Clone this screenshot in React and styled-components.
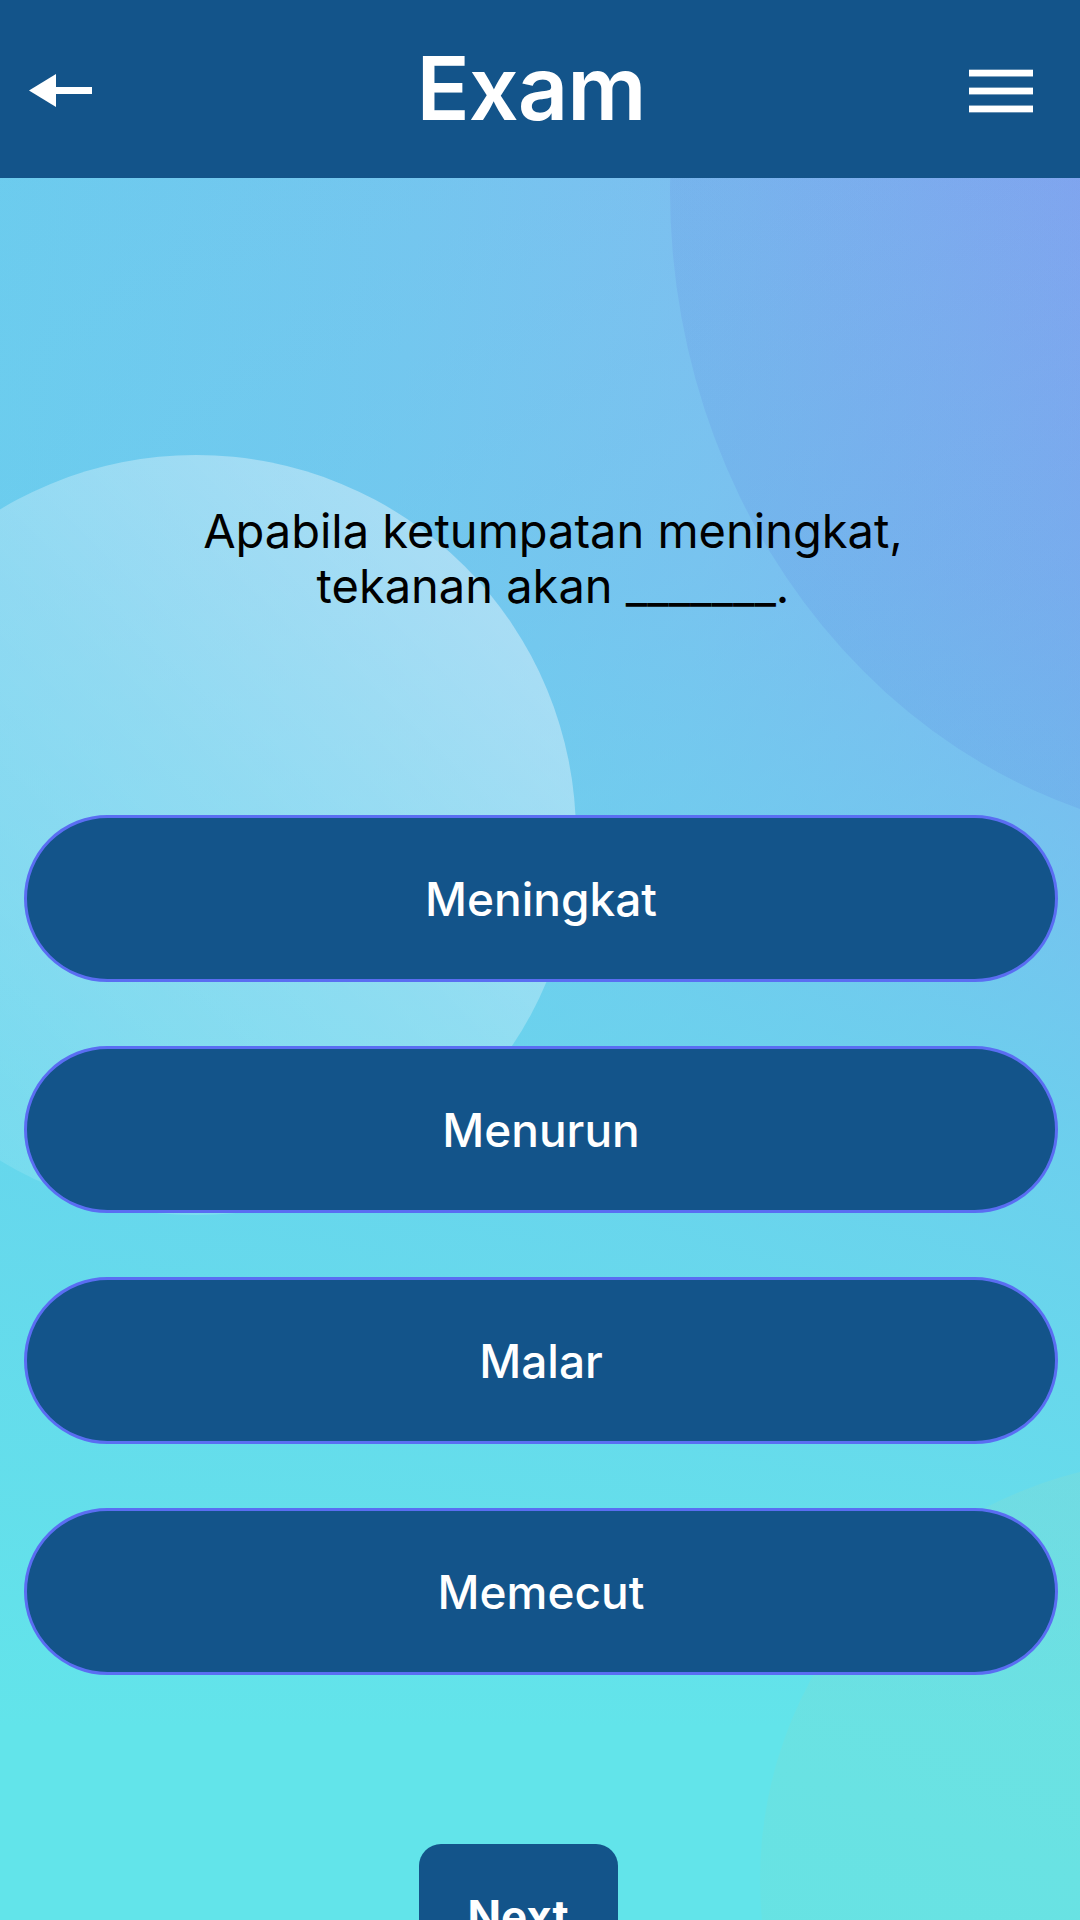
import React from 'react';
import styled, { createGlobalStyle } from 'styled-components';

const GlobalStyle = createGlobalStyle`
  html, body {
    margin: 0;
    padding: 0;
    overflow: hidden;
  }
  body {
    font-family: Inter, "Noto Sans", "Liberation Sans", sans-serif;
  }
  * {
    box-sizing: border-box;
  }
`;

const Page = styled.div`
  position: relative;
  width: 1080px;
  height: 1920px;
  overflow: hidden;
  display: flex;
  flex-direction: column;
  background:
    linear-gradient(180deg, rgba(104, 208, 237, 0) 0%, rgba(104, 210, 237, 0.35) 30%, rgba(100, 218, 236, 0.8) 60%, rgba(98, 228, 234, 1) 90%),
    linear-gradient(95deg, #6ccbee 0%, #76c4ef 35%, #80bcf0 60%, #8aa8f2 90%, #8f9ef3 100%);
`;

// soft shapes in the backdrop
const Blob = styled.div`
  position: absolute;
  border-radius: 50%;
  pointer-events: none;
  left: ${p => p.$x - p.$rx}px;
  top: ${p => p.$y - p.$ry}px;
  width: ${p => p.$rx * 2}px;
  height: ${p => p.$ry * 2}px;
  background: ${p => p.$fill};
`;

const Header = styled.header`
  position: relative;
  z-index: 1;
  flex-shrink: 0;
  height: 178px;
  background: #13548a;
  display: flex;
  align-items: center;
  padding: 4px 47px 0 29px;
`;

const IconButton = styled.button`
  border: 0;
  background: none;
  padding: 0;
  width: 64px;
  display: flex;
  align-items: center;
  justify-content: center;
  cursor: pointer;
`;

const Title = styled.h1`
  flex: 1;
  margin: 0 0 6px;
  text-align: center;
  color: #fff;
  font-size: 88px;
  font-weight: 600;
  letter-spacing: -1px;
  line-height: 1;
`;

const Content = styled.main`
  position: relative;
  z-index: 1;
  flex-shrink: 0;
  display: flex;
  flex-direction: column;
  align-items: center;
  padding: 325px 22px 0 24px;
`;

const Question = styled.p`
  margin: 0 0 202px;
  padding-left: 24px;
  text-align: center;
  color: #000;
  font-size: 47px;
  line-height: 55px;
  font-weight: 400;
`;

const Options = styled.div`
  width: 100%;
  display: flex;
  flex-direction: column;
  gap: 64px;
`;

const Option = styled.button`
  flex-shrink: 0;
  height: 167px;
  width: 100%;
  border-radius: 84px;
  border: 3px solid #5a6df2;
  background: #13548a;
  color: #fff;
  font-family: inherit;
  font-size: 46px;
  font-weight: 500;
  cursor: pointer;
`;

const NextButton = styled.button`
  flex-shrink: 0;
  margin: 169px 46px 0 0;
  width: 199px;
  height: 130px;
  border: 0;
  border-radius: 22px;
  background: #13548a;
  color: #fff;
  font-family: inherit;
  font-size: 44px;
  font-weight: 700;
  padding: 45px 0 0;
  display: flex;
  justify-content: center;
  align-items: flex-start;
  line-height: normal;
  cursor: pointer;
`;

const BackIcon = () => (
  <svg width="64" height="34" viewBox="0 0 64 34">
    <polygon points="0,16.5 27,0 27,33" fill="#fff" />
    <rect x="25" y="13" width="38" height="7" fill="#fff" />
  </svg>
);

const MenuIcon = () => (
  <svg width="66" height="45" viewBox="0 0 66 45">
    <rect x="0" y="0" width="66" height="7" fill="#fff" />
    <rect x="0" y="18.5" width="66" height="7" fill="#fff" />
    <rect x="0" y="37" width="66" height="7" fill="#fff" />
  </svg>
);

const options = ['Meningkat', 'Menurun', 'Malar', 'Memecut'];

export default function App() {
  return (
    <>
      <GlobalStyle />
      <Page>
        <Blob $x={1260} $y={190} $rx={590} $ry={650} $fill="linear-gradient(200deg, rgba(110, 100, 230, 0.12), rgba(70, 110, 215, 0.14))" />
        <Blob $x={196} $y={835} $rx={380} $ry={380} $fill="linear-gradient(225deg, rgba(255,255,255,0.45) 0%, rgba(255,255,255,0.25) 45%, rgba(255,255,255,0.06) 100%)" />
        <Blob $x={1180} $y={1880} $rx={420} $ry={420} $fill="linear-gradient(200deg, rgba(130, 220, 215, 0.45), rgba(100, 225, 205, 0.2))" />
        <Header>
          <IconButton aria-label="back"><BackIcon /></IconButton>
          <Title>Exam</Title>
          <IconButton aria-label="menu"><MenuIcon /></IconButton>
        </Header>
        <Content>
          <Question>
            Apabila ketumpatan meningkat,<br />
            tekanan akan _______.
          </Question>
          <Options>
            {options.map(o => (
              <Option key={o}>{o}</Option>
            ))}
          </Options>
          <NextButton>Next</NextButton>
        </Content>
      </Page>
    </>
  );
}
